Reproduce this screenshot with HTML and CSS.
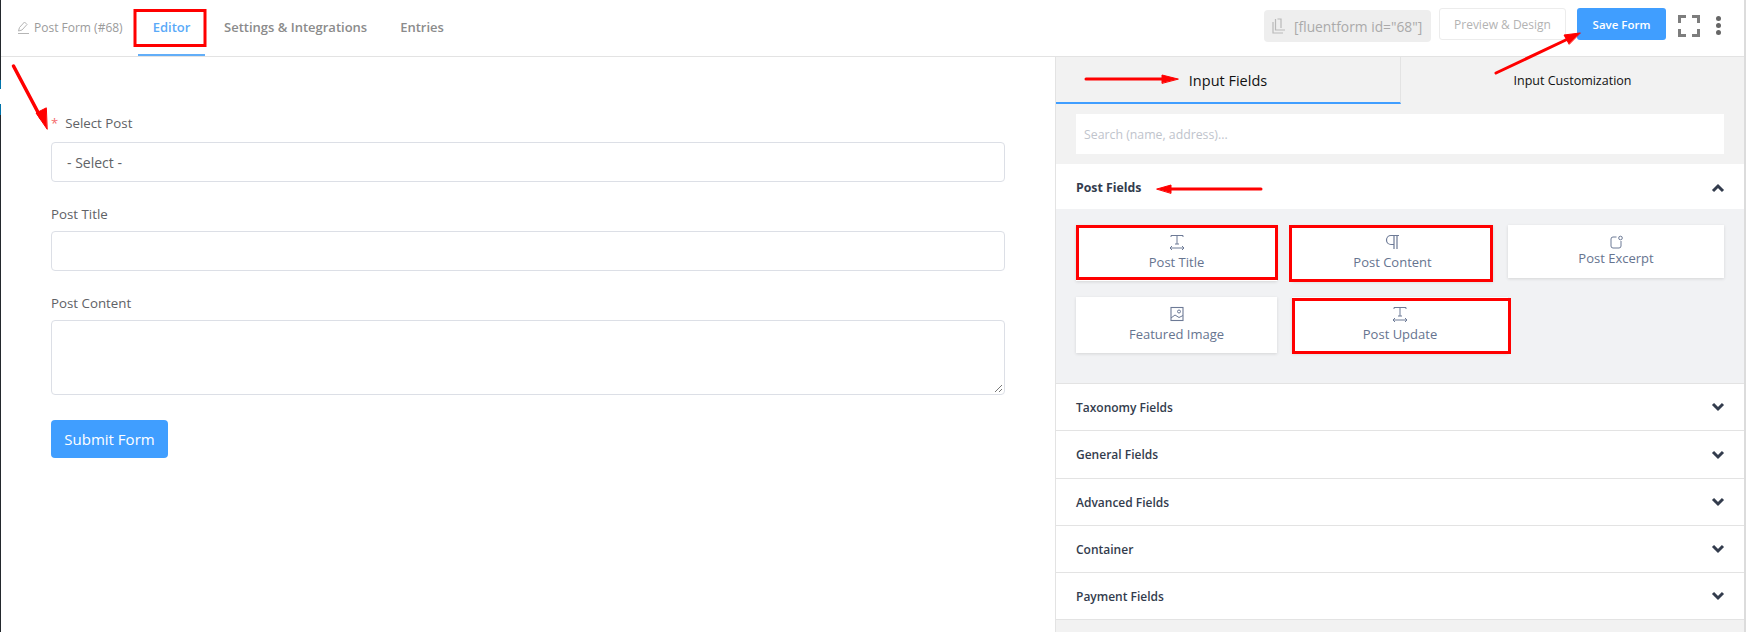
FILE: index.html
```html
<!DOCTYPE html>
<html lang="en">
<head>
<meta charset="utf-8">
<title>Post Form - Editor</title>
<link rel="stylesheet" href="styles.css">
</head>
<body>
<div class="page">
  <div class="strip"><span class="strip-dark"></span><span class="strip-blue"></span><span class="strip-white"></span><span class="strip-blue2"></span><span class="strip-rest"></span></div>
  <div class="app">
    <header class="topbar">
      <div class="nav">
        <span class="form-name">
          <svg class="pencil" viewBox="0 0 14 14" width="14" height="14"><path d="M1.5 10 L2.5 6.5 L7.5 1 L10 3.5 L5 9 Z M1 12.5 H12" fill="none" stroke="#b5b5b5" stroke-width="1"/></svg>
          Post Form (#68)
        </span>
        <a class="tab tab-active">Editor</a>
        <a class="tab">Settings &amp; Integrations</a>
        <a class="tab">Entries</a>
      </div>
      <div class="actions">
        <span class="shortcode">
          <svg viewBox="0 0 15 16" width="15" height="16"><path d="M4.5 1 V12 H14 M2 4 V15 H12 M6.5 1 H10 V10" fill="none" stroke="#b9b9b9" stroke-width="1.2"/></svg>
          [fluentform id="68"]
        </span>
        <button class="btn-preview">Preview &amp; Design</button>
        <button class="btn-save">Save Form</button>
        <svg class="fullscreen" viewBox="0 0 22 22" width="22" height="22"><path d="M1.5 8 V1.5 H8 M14 1.5 H20.5 V8 M20.5 14 V20.5 H14 M8 20.5 H1.5 V14" fill="none" stroke="#7d7d7d" stroke-width="3"/></svg>
        <span class="dots"><i></i><i></i><i></i></span>
      </div>
    </header>
    <div class="main">
      <section class="canvas">
        <div class="field field-first">
          <label class="label label-tall"><span class="req">*</span>Select Post</label>
          <div class="control control-select">- Select -</div>
        </div>
        <div class="field">
          <label class="label">Post Title</label>
          <div class="control"></div>
        </div>
        <div class="field field-last">
          <label class="label">Post Content</label>
          <div class="control control-area">
            <svg class="grip" viewBox="0 0 9 9" width="9" height="9"><path d="M1 8 L8 1 M5 8 L8 5" stroke="#777" stroke-width="1"/></svg>
          </div>
        </div>
        <button class="btn-submit">Submit Form</button>
      </section>
      <aside class="panel">
        <div class="panel-tabs">
          <div class="ptab ptab-active">Input Fields</div>
          <div class="ptab ptab-small">Input Customization</div>
        </div>
        <div class="search-wrap"><div class="search">Search (name, address)...</div></div>
        <div class="acc-head acc-open">
          <span>Post Fields</span>
          <svg class="chev" viewBox="0 0 14 10" width="14" height="10"><path d="M2 8 L7 3 L12 8" fill="none" stroke="#333c4d" stroke-width="3"/></svg>
        </div>
        <div class="cards">
          <div class="card-row">
            <div class="card card-a">
              <svg class="ficon" viewBox="0 0 16 16" width="16" height="16"><path d="M2 3 V1.5 H14 V3 M8 1.5 V10 M6 10 H10 M1 14 H15 M3 12 L1 14 L3 16 M13 12 L15 14 L13 16" fill="none" stroke="#6d7a96" stroke-width="1"/></svg>
              <span>Post Title</span>
            </div>
            <div class="card card-b">
              <svg class="ficon" viewBox="0 0 16 16" width="16" height="16"><path d="M14 1.5 H6 A4.5 4.5 0 0 0 6 10.5 H9 M9 1.5 V15 M12 1.5 V15" fill="none" stroke="#6d7a96" stroke-width="1.2"/></svg>
              <span>Post Content</span>
            </div>
            <div class="card card-c">
              <svg class="ficon" viewBox="0 0 16 16" width="16" height="16"><path d="M8.5 3 H5 A2 2 0 0 0 3 5 V12 A2 2 0 0 0 5 14 H11 A2 2 0 0 0 13 12 V7" fill="none" stroke="#6d7a96" stroke-width="1"/><circle cx="12.5" cy="4" r="1.8" fill="none" stroke="#6d7a96" stroke-width="1"/></svg>
              <span>Post Excerpt</span>
            </div>
          </div>
          <div class="card-row">
            <div class="card card-a">
              <svg class="ficon" viewBox="0 0 16 16" width="16" height="16"><rect x="2" y="1.5" width="12" height="13" fill="none" stroke="#6d7a96" stroke-width="1.1"/><circle cx="10" cy="5.5" r="1.5" fill="none" stroke="#6d7a96"/><path d="M2 12 L6 9 L10 11.5 L14 9.5" fill="none" stroke="#6d7a96"/></svg>
              <span>Featured Image</span>
            </div>
            <div class="card card-d">
              <svg class="ficon" viewBox="0 0 16 16" width="16" height="16"><path d="M2 3 V1.5 H14 V3 M8 1.5 V10 M6 10 H10 M1 14 H15 M3 12 L1 14 L3 16 M13 12 L15 14 L13 16" fill="none" stroke="#6d7a96" stroke-width="1"/></svg>
              <span>Post Update</span>
            </div>
          </div>
        </div>
        <div class="acc-head acc-closed"><span>Taxonomy Fields</span><svg class="chev" viewBox="0 0 14 10" width="14" height="10"><path d="M2 2 L7 7 L12 2" fill="none" stroke="#333c4d" stroke-width="3"/></svg></div>
        <div class="acc-head acc-closed acc-tall"><span>General Fields</span><svg class="chev" viewBox="0 0 14 10" width="14" height="10"><path d="M2 2 L7 7 L12 2" fill="none" stroke="#333c4d" stroke-width="3"/></svg></div>
        <div class="acc-head acc-closed"><span>Advanced Fields</span><svg class="chev" viewBox="0 0 14 10" width="14" height="10"><path d="M2 2 L7 7 L12 2" fill="none" stroke="#333c4d" stroke-width="3"/></svg></div>
        <div class="acc-head acc-closed"><span>Container</span><svg class="chev" viewBox="0 0 14 10" width="14" height="10"><path d="M2 2 L7 7 L12 2" fill="none" stroke="#333c4d" stroke-width="3"/></svg></div>
        <div class="acc-head acc-closed"><span>Payment Fields</span><svg class="chev" viewBox="0 0 14 10" width="14" height="10"><path d="M2 2 L7 7 L12 2" fill="none" stroke="#333c4d" stroke-width="3"/></svg></div>
      </aside>
    </div>
  </div>
  <div class="edge"></div>
  <svg class="markup" viewBox="0 0 1747 632" width="1747" height="632">
    <g fill="none" stroke="#f00" stroke-width="3">
      <rect x="135" y="10.5" width="70" height="35" />
      <rect x="1077.5" y="226.5" width="199" height="52" />
      <rect x="1290.5" y="226.5" width="201" height="54" />
      <rect x="1293.5" y="299.5" width="216" height="53" />
    </g>
    <g stroke="#f00" fill="#f00" stroke-linecap="round">
      <path d="M13.5 66 L41 118" stroke-width="3.5"/><path d="M47 129 L36 113 L46 108 Z" stroke-width="1"/>
      <path d="M1086 79 L1165 79" stroke-width="3"/><path d="M1178 79 L1162 75 L1162 83 Z" stroke-width="1"/>
      <path d="M1261 189 L1170 189" stroke-width="3"/><path d="M1157 189 L1171 185 L1171 193 Z" stroke-width="1"/>
      <path d="M1496 73 L1570 38" stroke-width="3"/><path d="M1580 33 L1564 35 L1569 44 Z" stroke-width="1"/>
    </g>
  </svg>
</div>
</body>
</html>
```

FILE: styles.css
```css
* { box-sizing: border-box; }
html, body { margin: 0; height: 100%; background: #fff; overflow: hidden; }
body { font-family: "Open Sans", "Noto Sans", sans-serif; font-size: 14px; color: #555; }

.page { position: relative; display: flex; width: 1747px; height: 632px; }

.strip { width: 1px; display: flex; flex-direction: column; flex: none; }
.strip-dark { height: 80px; background: #23282d; }
.strip-blue { height: 9px; background: #0073aa; }
.strip-white { height: 15px; background: #fff; }
.strip-blue2 { height: 11px; background: #0073aa; }
.strip-rest { flex: 1; background: #23282d; }

.edge { width: 2px; flex: none; background: #dcdcdc; }

.app { width: 1743px; flex: none; display: flex; flex-direction: column; }

.topbar { height: 57px; flex: none; display: flex; justify-content: space-between; align-items: center; border-bottom: 1px solid #e3e3e3; background: #fff; }
.nav { display: flex; align-items: stretch; height: 56px; padding-left: 16px; }
.form-name { display: flex; align-items: center; gap: 3px; font-size: 12px; color: #9b9b9b; width: 121px; padding-bottom: 1px; }
.tab { display: flex; align-items: center; padding: 0 15px; font-size: 13px; font-weight: 600; color: #8b8b8b; border-bottom: 2px solid transparent; height: 56px; margin-right: 3px; }
.tab-active { color: #5aaaf8; border-bottom-color: #62aef8; width: 67px; justify-content: center; padding: 0; margin-right: 4px; }
.actions { display: flex; align-items: center; height: 56px; padding: 0 23px 8px 0; }
.shortcode { display: flex; align-items: center; gap: 8px; width: 167px; height: 32px; margin-top: 4px; padding-left: 7px; background: #eeeeee; border-radius: 4px; font-size: 13.8px; color: #aaaaaa; white-space: nowrap; }
.btn-preview { width: 127px; height: 32px; margin-left: 8px; background: #fff; border: 1px solid #ececec; border-radius: 3px; font: inherit; font-size: 12px; color: #b3b3b3; padding: 0; }
.btn-save { width: 89px; height: 32px; margin-left: 11px; background: #409eff; border: 0; border-radius: 3px; font: inherit; font-size: 11.5px; font-weight: 600; color: #fff; padding: 0; }
.fullscreen { margin: 3px 0 0 12px; }
.dots { display: flex; flex-direction: column; gap: 2px; margin: 2px 0 0 16px; }
.dots i { display: block; width: 5px; height: 5px; border-radius: 50%; background: #666; }

.main { flex: 1; display: flex; min-height: 0; }

.canvas { width: 1055px; flex: none; background: #fff; padding: 56px 50px 0; border-right: 1px solid #e3e3e3; }
.field { display: flex; flex-direction: column; height: 91px; }
.field-last { height: auto; margin-top: -2px; }
.label { display: block; flex: none; height: 27px; line-height: 20px; font-size: 13.3px; color: #606266; }
.label-tall { height: 29px; }
.req { color: #f56c6c; margin-right: 7px; font-size: 13px; }
.control { height: 40px; flex: none; border: 1px solid #dcdfe6; border-radius: 4px; background: #fff; font-size: 14px; color: #606266; }
.control-select { display: flex; align-items: center; padding-left: 15px; }
.control-area { position: relative; height: 75px; }
.grip { position: absolute; right: 1px; bottom: 1px; }
.btn-submit { display: block; width: 117px; height: 38px; margin-top: 25px; background: #409eff; border: 0; border-radius: 4px; font: inherit; font-size: 15px; color: #fff; padding: 0; }

.panel { flex: 1; background: #f2f2f2; display: flex; flex-direction: column; }
.panel-tabs { display: flex; height: 47px; flex: none; }
.ptab { display: flex; align-items: center; justify-content: center; color: #111; }
.ptab-active { width: 345px; font-size: 14.5px; border-right: 1px solid #e3e3e3; border-bottom: 2px solid #409eff; padding-top: 1px; }
.ptab-small { flex: 1; font-size: 12.5px; padding-bottom: 1px; }
.search-wrap { height: 60px; padding: 10px 20px; flex: none; }
.search { height: 40px; background: #fff; padding: 2px 0 0 8px; line-height: 38px; font-size: 12.3px; color: #c0c4cc; }

.acc-head { display: flex; justify-content: space-between; align-items: center; padding: 0 19px 0 20px; background: #fff; font-size: 12px; color: #333c4d; border-bottom: 1px solid #e3e3e3; flex: none; height: 47px; }
.acc-tall { height: 48px; }
.acc-open { height: 45px; padding-top: 2px; font-size: 12.3px; font-weight: 700; border-bottom: 0; }
.acc-closed { font-weight: 600; }
.cards { height: 175px; flex: none; background: #f1f2f4; padding: 16px 20px 0; display: flex; flex-direction: column; gap: 16px; border-bottom: 1px solid #e3e3e3; }
.card-row { display: flex; align-items: flex-start; }
.card { display: flex; flex-direction: column; align-items: center; height: 56px; padding-top: 9px; background: #fff; box-shadow: 0 1px 3px rgba(0,0,0,.12); font-size: 13px; color: #66748f; }
.card span { display: block; line-height: 18px; margin-top: 3px; }
.card-a { width: 201px; }
.card-b { width: 201px; margin-left: 15px; }
.card-c { width: 216px; margin-left: 15px; height: 53px; }
.card .card-c-text, .card-c span { margin-top: -1px; }
.card-d { width: 216px; margin-left: 15px; }
.ficon { flex: none; }
.chev { flex: none; }

.markup { position: absolute; left: 0; top: 0; pointer-events: none; }
```
